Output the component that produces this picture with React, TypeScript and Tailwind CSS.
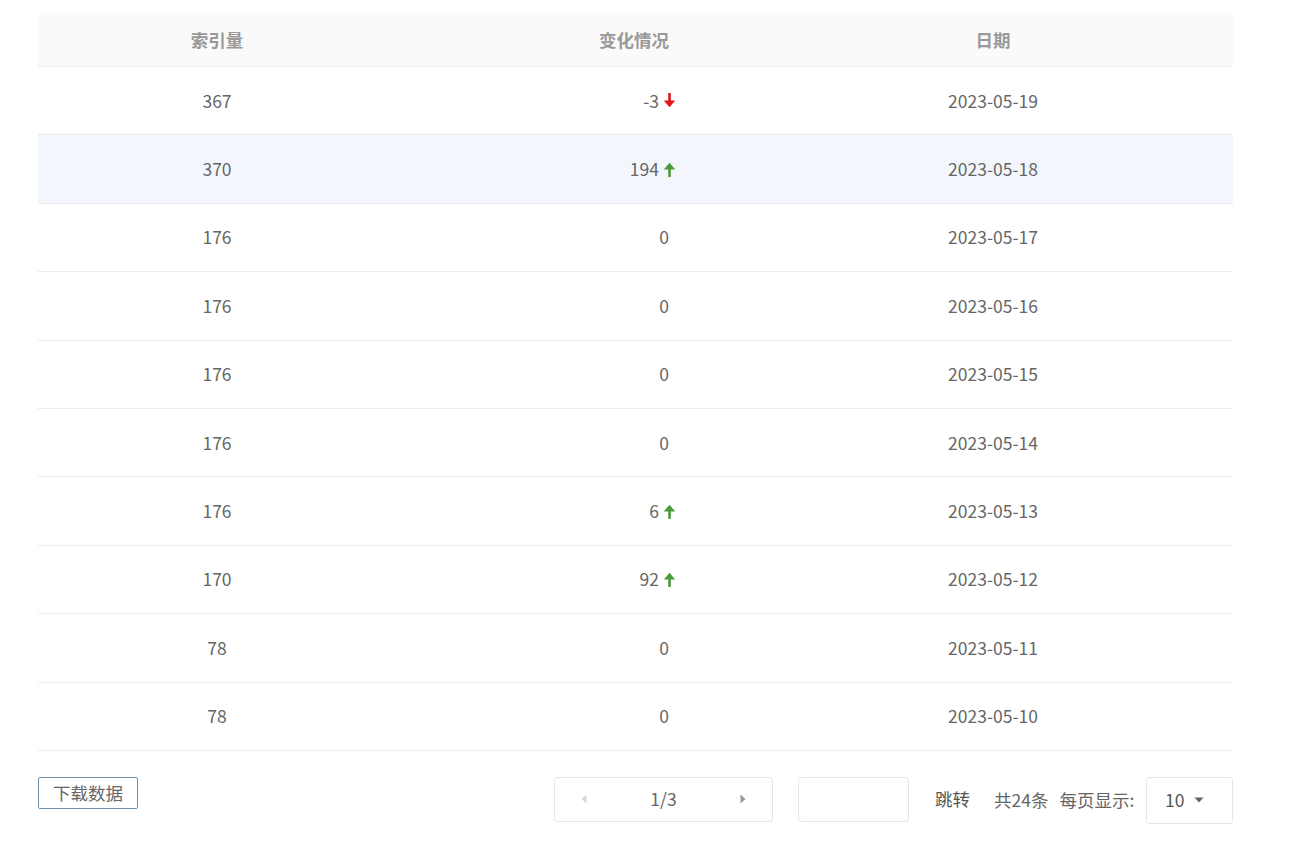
import React from "react";

type Row = { idx: number; change: number; date: string };

const rows: Row[] = [
  { idx: 367, change: -3, date: "2023-05-19" },
  { idx: 370, change: 194, date: "2023-05-18" },
  { idx: 176, change: 0, date: "2023-05-17" },
  { idx: 176, change: 0, date: "2023-05-16" },
  { idx: 176, change: 0, date: "2023-05-15" },
  { idx: 176, change: 0, date: "2023-05-14" },
  { idx: 176, change: 6, date: "2023-05-13" },
  { idx: 170, change: 92, date: "2023-05-12" },
  { idx: 78, change: 0, date: "2023-05-11" },
  { idx: 78, change: 0, date: "2023-05-10" },
];

const Up = () => (
  <svg width="13" height="15" viewBox="0 0 13 15" className="ml-[4px]">
    <path d="M6.5 15V5" stroke="#4a9a3c" strokeWidth="2.6" />
    <path d="M0.8 7.4L6.5 0.8L12.2 7.4Z" fill="#4a9a3c" />
  </svg>
);

const Down = () => (
  <svg width="13" height="15" viewBox="0 0 13 15" className="ml-[4px]">
    <path d="M6.5 0V10" stroke="#e3141b" strokeWidth="2.6" />
    <path d="M0.8 7.6L6.5 14.2L12.2 7.6Z" fill="#e3141b" />
  </svg>
);

export default function App() {
  const font = {
    fontFamily: '"Microsoft YaHei", "Noto Sans CJK SC", "Noto Sans", sans-serif',
  };
  return (
    <div className="w-[1300px] h-[843px] bg-white" style={font}>
      <div className="pt-[15px] pl-[38px] w-[1233px]">
        <div className="flex h-[52px] items-center bg-[#fafafa] border-b border-[#ececec] text-[17.5px] font-bold text-[#999999]">
          <div className="w-[358px] text-center">索引量</div>
          <div className="w-[476px] text-center">变化情况</div>
          <div className="w-[242px] text-center">日期</div>
        </div>
        {rows.map((r, i) => (
          <div
            key={i}
            className={`flex h-[68.4px] items-center border-b border-[#ececec] text-[17.5px] text-[#666666] ${
              i === 1 ? "bg-[#f3f7fd]" : "bg-white"
            }`}
          >
            <div className="w-[358px] text-center">{r.idx}</div>
            {r.change === 0 ? (
              <div className="w-[476px] flex justify-center pl-[60px]">0</div>
            ) : (
              <div className="w-[476px] flex justify-end items-center pr-[196px]">
                <span>{r.change}</span>
                {r.change > 0 ? <Up /> : <Down />}
              </div>
            )}
            <div className="w-[242px] text-center">{r.date}</div>
          </div>
        ))}
        <div className="flex items-start mt-[26px] text-[17.5px] text-[#666666]">
          <button className="w-[100px] h-[32px] border border-[#6f8fae] rounded-[2px] text-[#666666] text-[17.5px] leading-[30px]">
            下载数据
          </button>
          <div className="ml-[416px] w-[219px] h-[45px] border border-[#e6e6e6] rounded-[3px] flex items-center px-[26px] justify-between">
            <svg width="6" height="10" viewBox="0 0 6 10">
              <path d="M5.5 0.5L0.5 5L5.5 9.5Z" fill="#d9d9d9" />
            </svg>
            <span className="text-[#666666]">1/3</span>
            <svg width="6" height="10" viewBox="0 0 6 10">
              <path d="M0.5 0.5L5.5 5L0.5 9.5Z" fill="#999999" />
            </svg>
          </div>
          <div className="ml-[25px] w-[111px] h-[45px] border border-[#e6e6e6] rounded-[3px]" />
          <div className="ml-[26px] mt-[9px] text-[#555555]">跳转</div>
          <div className="ml-[24px] mt-[10px]">共24条</div>
          <div className="ml-[11px] mt-[10px]">每页显示:</div>
          <div className="ml-auto w-[87px] h-[47px] border border-[#e6e6e6] rounded-[3px] flex items-center pl-[18px]">
            <span className="text-[#555555]">10</span>
            <svg width="10" height="6" viewBox="0 0 10 6" className="ml-[10px]">
              <path d="M0.5 0.5L9.5 0.5L5 5.5Z" fill="#666666" />
            </svg>
          </div>
        </div>
      </div>
    </div>
  );
}
